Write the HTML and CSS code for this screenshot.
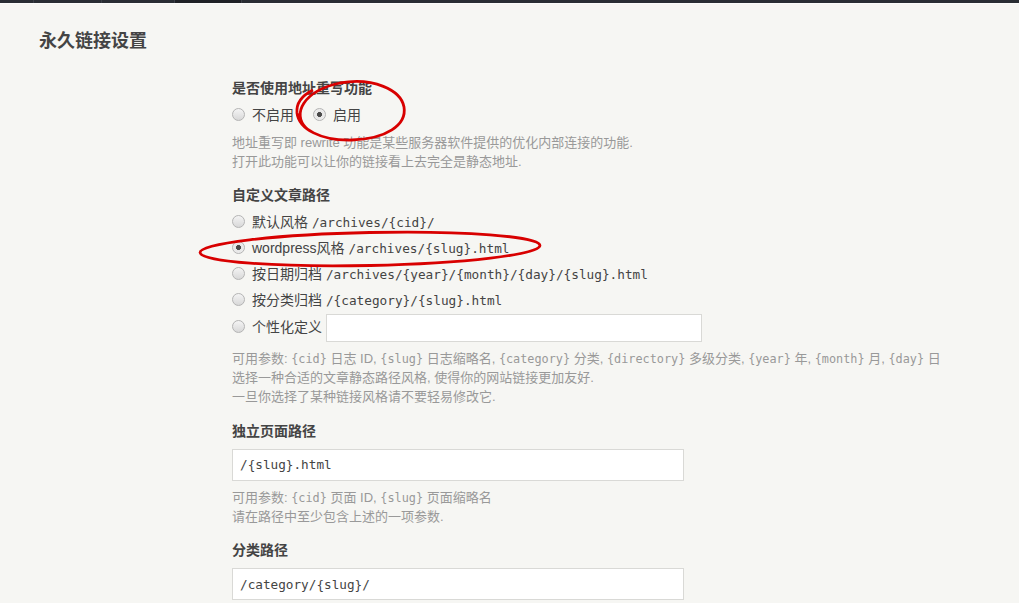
FILE: index.html
```html
<!DOCTYPE html>
<html lang="zh-CN">

<head>
    <meta charset="UTF-8">
    <meta name="viewport" content="width=device-width, initial-scale=1.0">
    <title>永久链接设置</title>
    <link rel="stylesheet" href="styles.css">
</head>

<body>
    <div class="head-nav">
        <span class="nav-item" style="width: 33px"></span>
        <span class="nav-item" style="width: 67px"></span>
        <span class="nav-item" style="width: 72px"></span>
        <span class="nav-item active" style="width: 66px"></span>
        <span class="nav-rest"></span>
    </div>

    <div class="main">
        <h2 class="page-title">永久链接设置</h2>

        <form class="option-form">
            <ul class="option">
                <li>
                    <label class="option-label">是否使用地址重写功能</label>
                    <span class="inline-option"><input type="radio" name="rewrite" id="rewrite-0"><label for="rewrite-0">不启用</label></span>
                    <span class="inline-option"><input type="radio" name="rewrite" id="rewrite-1" checked><label for="rewrite-1">启用</label></span>
                    <p class="description">地址重写即 rewrite 功能是某些服务器软件提供的优化内部连接的功能.<br>打开此功能可以让你的链接看上去完全是静态地址.</p>
                </li>
            </ul>

            <ul class="option">
                <li>
                    <label class="option-label">自定义文章路径</label>
                    <span class="multiline"><input type="radio" name="postPattern" id="post-0"><label for="post-0">默认风格 <code>/archives/{cid}/</code></label></span>
                    <span class="multiline"><input type="radio" name="postPattern" id="post-1" checked><label for="post-1">wordpress风格 <code>/archives/{slug}.html</code></label></span>
                    <span class="multiline"><input type="radio" name="postPattern" id="post-2"><label for="post-2">按日期归档 <code>/archives/{year}/{month}/{day}/{slug}.html</code></label></span>
                    <span class="multiline"><input type="radio" name="postPattern" id="post-3"><label for="post-3">按分类归档 <code>/{category}/{slug}.html</code></label></span>
                    <span class="multiline custom"><input type="radio" name="postPattern" id="post-4"><label for="post-4">个性化定义</label> <input type="text" class="text w-50" name="customPattern"></span>
                    <p class="description after-input">可用参数: <code>{cid}</code> 日志 ID, <code>{slug}</code> 日志缩略名, <code>{category}</code> 分类, <code>{directory}</code> 多级分类, <code>{year}</code> 年, <code>{month}</code> 月, <code>{day}</code> 日<br>选择一种合适的文章静态路径风格, 使得你的网站链接更加友好.<br>一旦你选择了某种链接风格请不要轻易修改它.</p>
                </li>
            </ul>

            <ul class="option">
                <li>
                    <label class="option-label input-label" for="pagePattern">独立页面路径</label>
                    <input type="text" class="text w-60 mono" id="pagePattern" value="/{slug}.html">
                    <p class="description after-input">可用参数: <code>{cid}</code> 页面 ID, <code>{slug}</code> 页面缩略名<br>请在路径中至少包含上述的一项参数.</p>
                </li>
            </ul>

            <ul class="option">
                <li>
                    <label class="option-label input-label" for="categoryPattern">分类路径</label>
                    <input type="text" class="text w-60 mono" id="categoryPattern" value="/category/{slug}/">
                </li>
            </ul>
        </form>
    </div>

    <!-- red pen marks over the screenshot -->
    <svg class="marks" width="1019" height="603" viewBox="0 0 1019 603">
        <path d="M306 128 C292 114 303 91 340 83 C373 77 401 90 404 107 C407 125 386 139 352 140 C321 141 299 129 297 113 C296 103 303 95 313 90" />
        <ellipse cx="370" cy="249" rx="170" ry="16.5" transform="rotate(-1.2 370 249)" />
    </svg>
</body>

</html>
```

FILE: styles.css
```css
body {
    margin: 0;
    background: #f6f6f3;
    color: #444;
    font-family: "Liberation Sans", "Noto Sans CJK SC", sans-serif;
    font-size: 14px;
}

.head-nav {
    display: flex;
    height: 3px;
    background: #292d33;
    border-bottom: 1px solid #fbfbfa;
}

.nav-item {
    border-right: 1px solid #3b3f47;
}

.nav-item.active {
    background: #1f2126;
}

.nav-rest {
    flex: 1;
}

.main {
    padding: 0 34px 0 39px;
}

.page-title {
    margin: 24px 0 0;
    font-size: 18px;
    line-height: 27px;
    font-weight: bold;
    color: #444;
}

.option-form {
    margin: 23px 0 0 193px;
    width: 753px;
}

.option {
    list-style: none;
    margin: 0 0 14.5px;
    padding: 0;
}

.option-label {
    display: block;
    font-weight: bold;
    line-height: 20px;
    margin-bottom: 4px;
}

.option-label.input-label {
    margin-bottom: 8px;
}

.inline-option {
    display: inline-block;
    line-height: 26px;
    margin-right: 15px;
}

.multiline {
    display: block;
    line-height: 26px;
    height: 26px;
}

.multiline:nth-of-type(4) {
    height: 25px;
}

.multiline.custom {
    line-height: 30px;
    height: 30px;
}

code {
    font-family: "DejaVu Sans Mono", monospace;
    font-size: 0.91em;
    line-height: 1;
}

input[type="radio"] {
    appearance: none;
    -webkit-appearance: none;
    width: 13px;
    height: 13px;
    margin: 0 7px 0 0;
    border: 1px solid #b4b4b4;
    border-radius: 50%;
    background: linear-gradient(#f4f4f4, #d8d8d8);
    vertical-align: -1px;
    box-sizing: border-box;
}

input[type="radio"]:checked {
    background: radial-gradient(circle, #4a4a4a 0 2.2px, #e6e6e6 2.8px, #f2f2f2 100%);
}

.text {
    box-sizing: border-box;
    border: 1px solid #d9d9d6;
    background: #fff;
    padding: 0 7px;
    color: #444;
    outline: none;
}

.w-50 {
    width: 376px;
    height: 28px;
    vertical-align: middle;
    margin-left: 0;
}

.w-60 {
    display: block;
    width: 452px;
    height: 32px;
}

.mono {
    font-family: "DejaVu Sans Mono", monospace;
    font-size: 12.7px;
}

.description {
    margin: 4.5px 0 0;
    font-size: 13px;
    line-height: 19px;
    color: #999;
}

.description.after-input {
    margin-top: 7px;
}

.marks {
    position: absolute;
    top: 0;
    left: 0;
    pointer-events: none;
}

.marks path,
.marks ellipse {
    fill: none;
    stroke: #d80000;
    stroke-width: 2.8;
}
```
